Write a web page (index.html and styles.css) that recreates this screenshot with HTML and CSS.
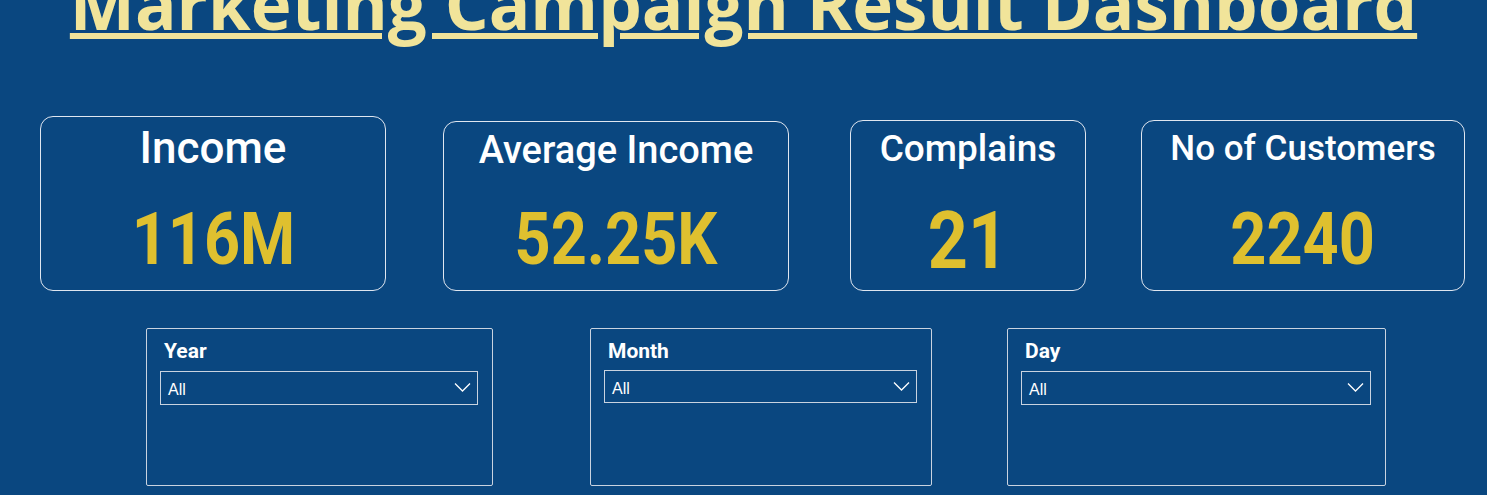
FILE: index.html
```html
<!DOCTYPE html>
<html>
<head>
<meta charset="utf-8">
<link rel="stylesheet" href="styles.css">
</head>
<body>
<div class="page">
  <h1 class="title">Marketing Campaign Result Dashboard</h1>
  <div class="cards">
    <div class="card card-income">
      <div class="label label-lg">Income</div>
      <div class="value"><span>116M</span></div>
    </div>
    <div class="card card-avg">
      <div class="label">Average Income</div>
      <div class="value"><span>52.25K</span></div>
    </div>
    <div class="card card-compl">
      <div class="label label-md">Complains</div>
      <div class="value value-lg"><span>21</span></div>
    </div>
    <div class="card card-cust">
      <div class="label label-sm">No of Customers</div>
      <div class="value"><span>2240</span></div>
    </div>
  </div>
  <div class="slicers">
    <div class="slicer slicer-year">
      <div class="slicer-title">Year</div>
      <div class="dropdown"><span>All</span>
        <svg class="chev" width="17" height="10" viewBox="0 0 17 10"><polyline points="1,1.5 8.5,9 16,1.5" fill="none" stroke="#ffffff" stroke-width="1.3"/></svg>
      </div>
    </div>
    <div class="slicer slicer-month">
      <div class="slicer-title">Month</div>
      <div class="dropdown dd-month"><span>All</span>
        <svg class="chev" width="17" height="10" viewBox="0 0 17 10"><polyline points="1,1.5 8.5,9 16,1.5" fill="none" stroke="#ffffff" stroke-width="1.3"/></svg>
      </div>
    </div>
    <div class="slicer slicer-day">
      <div class="slicer-title">Day</div>
      <div class="dropdown"><span>All</span>
        <svg class="chev" width="17" height="10" viewBox="0 0 17 10"><polyline points="1,1.5 8.5,9 16,1.5" fill="none" stroke="#ffffff" stroke-width="1.3"/></svg>
      </div>
    </div>
  </div>
</div>
</body>
</html>
```
FILE: styles.css
```css
html, body {
  margin: 0;
  padding: 0;
  background: #0a4780;
  overflow: hidden;
}
.page {
  width: 1487px;
  height: 495px;
  display: flex;
  flex-direction: column;
}
.title {
  margin: -37px 0 0 0;
  text-align: center;
  font-family: "Open Sans", sans-serif;
  font-weight: 700;
  font-size: 69px;
  line-height: 80px;
  height: 80px;
  color: #f1e49a;
  text-decoration: underline;
  text-decoration-thickness: 6px;
  text-underline-offset: 3px;
  white-space: nowrap;
}
.cards {
  display: flex;
  align-items: flex-end;
  margin-top: 73px;
  padding-left: 40px;
  height: 175px;
}
.card {
  box-sizing: border-box;
  border: 1px solid #dfe6f0;
  border-radius: 13px;
  display: flex;
  flex-direction: column;
  align-items: center;
  justify-content: space-between;
  padding-bottom: 14px;
  font-family: Roboto, sans-serif;
}
.card-income { width: 346px; height: 175px; }
.card-avg { width: 346px; height: 170px; margin-left: 57px; }
.card-compl { width: 236px; height: 171px; margin-left: 61px; }
.card-cust { width: 324px; height: 171px; margin-left: 55px; }
.label {
  color: #ffffff;
  font-size: 38px;
  font-weight: 500;
  line-height: 40px;
  margin-top: 8px;
  white-space: nowrap;
}
.label-lg { font-size: 44px; line-height: 44px; margin-top: 9px; }
.label-md { font-size: 37px; }
.label-sm { font-size: 35px; }
.value {
  color: #dfc02f;
  font-size: 72px;
  font-weight: 700;
  line-height: 72px;
  white-space: nowrap;
}
.value span {
  display: inline-block;
  transform: scaleX(0.875);
}
.value-lg { font-size: 80px; line-height: 80px; margin-bottom: -5px; }
.slicers {
  display: flex;
  margin-top: 37px;
  padding-left: 146px;
}
.slicer {
  box-sizing: border-box;
  height: 158px;
  border: 1px solid #c9d3e0;
  border-radius: 2px;
  padding: 11px 14px 0 13px;
}
.slicer-year { width: 347px; }
.slicer-month { width: 342px; margin-left: 97px; }
.slicer-day { width: 379px; margin-left: 75px; }
.slicer-title {
  color: #ffffff;
  font-family: Roboto, sans-serif;
  font-weight: 700;
  font-size: 21px;
  line-height: 22px;
  padding-left: 4px;
}
.dropdown {
  box-sizing: border-box;
  margin-top: 9px;
  height: 34px;
  border: 1px solid #c9d3e0;
  display: flex;
  align-items: center;
  justify-content: space-between;
  padding: 4px 6px 0 7px;
  color: #ffffff;
  font-family: "Liberation Sans", Arial, sans-serif;
  font-size: 16px;
}
.dd-month { height: 33px; margin-top: 8px; }
.chev { margin-top: -6px; }
```
